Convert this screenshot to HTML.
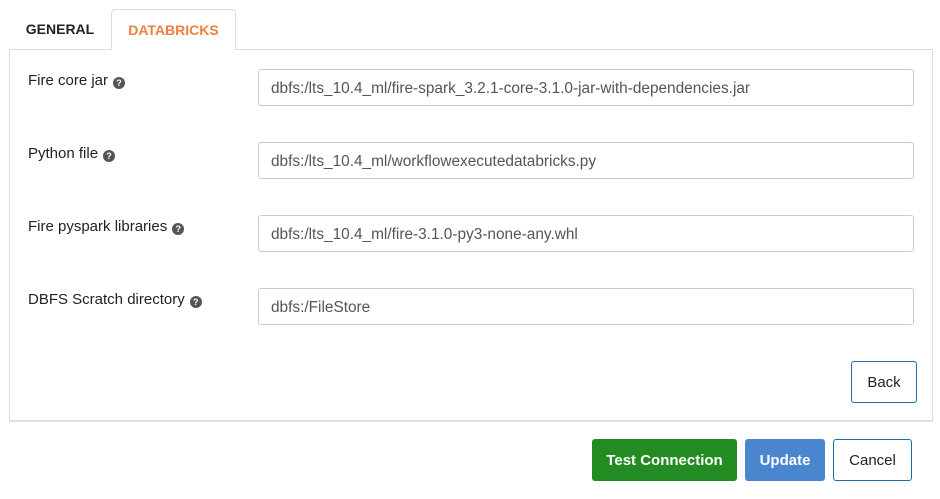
<!DOCTYPE html>
<html><head><meta charset="utf-8"><style>
*{box-sizing:border-box;margin:0;padding:0}
body{width:940px;height:499px;background:#fff;font-family:"Liberation Sans",sans-serif;position:relative;overflow:hidden;color:#222}
.tab{position:absolute;top:9px;height:41px;font-weight:bold;font-size:14px;line-height:40px;text-align:center}
.t1{left:10px;width:100px;color:#222}
.t2{left:111px;width:125px;color:#f0803c;border:1px solid #ddd;border-bottom:none;border-radius:4px 4px 0 0;background:#fff;z-index:2}
.panel{position:absolute;left:9px;top:49px;width:924px;height:373px;border:1px solid #ddd;border-bottom:2px solid #dde1e5}
.lbl{position:absolute;left:28px;font-size:15px;color:#222}
.q{display:inline-block;width:12px;height:12px;border-radius:50%;background:#555;color:#fff;font-size:9px;font-weight:bold;line-height:12px;text-align:center;vertical-align:-1px;margin-left:5px}
.inp{position:absolute;left:258px;width:656px;height:37px;border:1px solid #ccc;border-radius:3px;font-size:15.4px;color:#555;padding-left:12px;line-height:37px}
.btn{position:absolute;border-radius:3px;font-size:15px;text-align:center}
</style></head><body>
<div class="tab t1">GENERAL</div>
<div class="tab t2">DATABRICKS</div>
<div class="panel"></div>
<div class="lbl" style="top:72px">Fire core jar<span class="q">?</span></div>
<div class="inp" style="top:69px">dbfs:/lts_10.4_ml/fire-spark_3.2.1-core-3.1.0-jar-with-dependencies.jar</div>
<div class="lbl" style="top:145px">Python file<span class="q">?</span></div>
<div class="inp" style="top:142px">dbfs:/lts_10.4_ml/workflowexecutedatabricks.py</div>
<div class="lbl" style="top:218px">Fire pyspark libraries<span class="q">?</span></div>
<div class="inp" style="top:215px">dbfs:/lts_10.4_ml/fire-3.1.0-py3-none-any.whl</div>
<div class="lbl" style="top:291px">DBFS Scratch directory<span class="q">?</span></div>
<div class="inp" style="top:288px">dbfs:/FileStore</div>
<div class="btn" style="left:851px;top:361px;width:66px;height:42px;line-height:42px;border:1px solid #1a6fa8;color:#222">Back</div>
<div class="btn" style="left:592px;top:439px;width:145px;height:42px;line-height:44px;background:#228b22;color:#fff;font-weight:bold">Test Connection</div>
<div class="btn" style="left:745px;top:439px;width:80px;height:42px;line-height:44px;background:#4a86d0;color:#fff;font-weight:bold">Update</div>
<div class="btn" style="left:833px;top:439px;width:79px;height:42px;line-height:42px;border:1px solid #1a6fa8;color:#222">Cancel</div>
</body></html>
